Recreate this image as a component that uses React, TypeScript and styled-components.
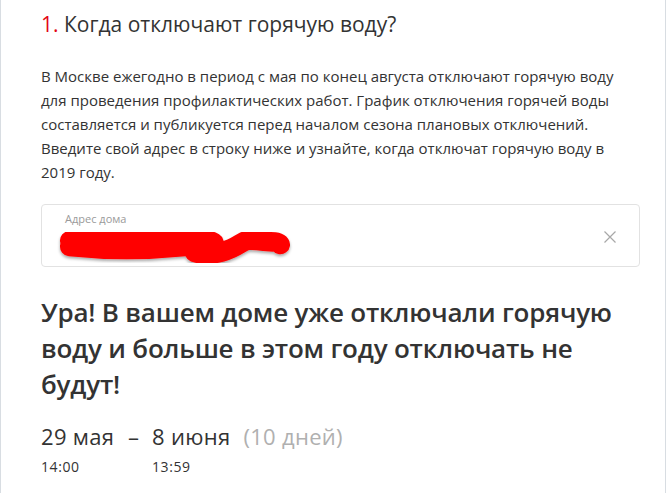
import React from "react";
import styled, { createGlobalStyle } from "styled-components";

const Global = createGlobalStyle`
  html, body { margin: 0; padding: 0; background: #fff; }
  body { font-family: "Open Sans", "Noto Sans", sans-serif; color: #333; }
`;

const Card = styled.div`
  box-sizing: border-box;
  width: 666px;
  height: 493px;
  overflow: hidden;
  border-left: 1px solid #d8dde2;
  border-right: 1px solid #d8dde2;
  padding: 4px 25px 0 40px;
  display: flex;
  flex-direction: column;
`;

const Title = styled.h2`
  margin: 0;
  font-size: 21px;
  line-height: 40px;
  font-weight: 500;
  color: #333;
`;

const Num = styled.span`
  color: #e30613;
`;

const Lead = styled.p`
  margin: 20px 0 0;
  font-size: 15px;
  line-height: 24px;
  color: #333;
  white-space: nowrap;
`;

const Field = styled.div`
  margin-top: 20px;
  height: 63px;
  box-sizing: border-box;
  border: 1px solid #e2e2e2;
  border-radius: 4px;
  display: flex;
  align-items: center;
  padding: 0 22px 0 23px;
`;

const FieldBody = styled.div`
  flex: 1;
  display: flex;
  flex-direction: column;
  align-self: stretch;
  padding-top: 6px;
`;

const Label = styled.div`
  font-size: 11px;
  line-height: 16px;
  color: #9a9a9a;
`;

const Clear = styled.button`
  border: 0;
  background: none;
  padding: 0;
  width: 14px;
  height: 14px;
  display: flex;
  cursor: pointer;
  margin-top: 2px;
`;

const Result = styled.h1`
  margin: 27px 0 0;
  font-size: 26px;
  line-height: 36px;
  font-weight: 600;
  letter-spacing: -0.2px;
  color: #333;
  white-space: nowrap;
`;

const Period = styled.div`
  margin-top: 20px;
  display: flex;
  align-items: flex-start;
`;

const DateCol = styled.div<{ $w?: number }>`
  display: flex;
  flex-direction: column;
  width: ${(p) => (p.$w ? `${p.$w}px` : "auto")};
`;

const DateText = styled.div`
  font-size: 22px;
  line-height: 28px;
  font-weight: 500;
  letter-spacing: 0.3px;
  color: #333;
  white-space: nowrap;
`;

const Days = styled.span`
  color: #b0b0b0;
  font-weight: 400;
  margin-left: 13px;
`;

const Time = styled.div`
  font-size: 14px;
  line-height: 20px;
  letter-spacing: 0.6px;
  color: #333;
  margin-top: 7px;
`;

const Dash = styled.div`
  font-size: 22px;
  line-height: 28px;
  color: #333;
  width: 37px;
  text-align: center;
`;

export default function App() {
  return (
    <>
      <Global />
      <Card>
        <Title>
          <Num>1.</Num> Когда отключают горячую воду?
        </Title>
        <Lead>
          В Москве ежегодно в период с мая по конец августа отключают горячую воду
          <br />
          для проведения профилактических работ. График отключения горячей воды
          <br />
          составляется и публикуется перед началом сезона плановых отключений.
          <br />
          Введите свой адрес в строку ниже и узнайте, когда отключат горячую воду в
          <br />
          2019 году.
        </Lead>
        <Field>
          <FieldBody>
            <Label>Адрес дома</Label>
            <svg width="240" height="40" viewBox="0 0 240 40" style={{ marginLeft: -10 }}>
              <defs>
                <filter id="sh" x="-10%" y="-30%" width="120%" height="180%">
                  <feDropShadow dx="0" dy="2" stdDeviation="1.5" floodColor="#000" floodOpacity="0.35" />
                </filter>
              </defs>
              <g filter="url(#sh)" fill="none" stroke="#ff0000" strokeLinecap="round" strokeLinejoin="round">
                <path d="M12 14 C 40 12, 70 10, 100 12 S 150 10, 160 16" strokeWidth="20" />
                <path d="M12 20 C 50 24, 90 24, 130 20" strokeWidth="20" />
                <path d="M140 26 C 150 30, 165 28, 178 22 S 190 12, 205 14 S 225 14, 228 18" strokeWidth="20" />
              </g>
            </svg>
          </FieldBody>
          <Clear aria-label="Очистить">
            <svg width="14" height="14" viewBox="0 0 14 14">
              <path d="M1.5 1.5 L12.5 12.5 M12.5 1.5 L1.5 12.5" stroke="#a8a8a8" strokeWidth="1.2" />
            </svg>
          </Clear>
        </Field>
        <Result>
          Ура! В вашем доме уже отключали горячую
          <br />
          воду и больше в этом году отключать не
          <br />
          будут!
        </Result>
        <Period>
          <DateCol $w={74}>
            <DateText>29 мая</DateText>
            <Time>14:00</Time>
          </DateCol>
          <Dash>–</Dash>
          <DateCol>
            <DateText>
              8 июня<Days>(10 дней)</Days>
            </DateText>
            <Time>13:59</Time>
          </DateCol>
        </Period>
      </Card>
    </>
  );
}
